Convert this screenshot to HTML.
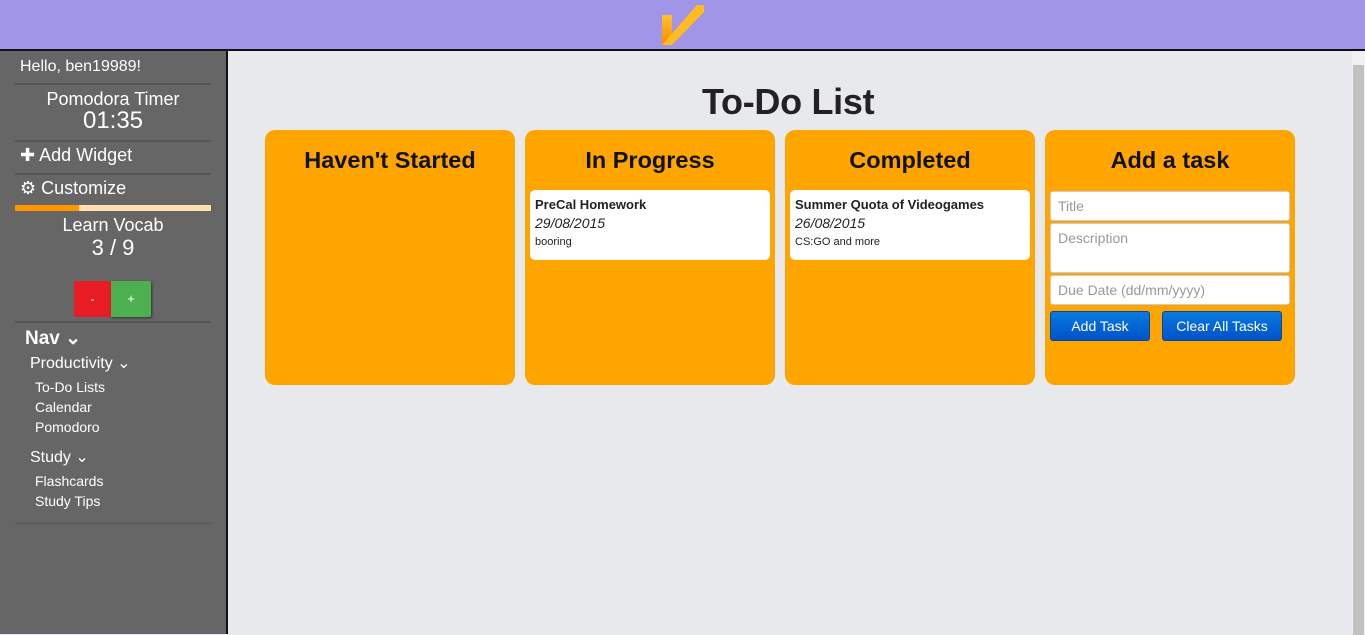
<!DOCTYPE html>
<html><head><style>
*{box-sizing:border-box;margin:0;padding:0}
body{width:1365px;height:634px;overflow:hidden;background:#e8e9ed;font-family:"Liberation Sans",sans-serif;position:relative}
#hdr{position:absolute;left:0;top:0;width:1365px;height:51px;background:#a095e6;border-bottom:2px solid #111}
#side{position:absolute;left:0;top:51px;width:226px;height:583px;background:#666;color:#fff}
#vline{position:absolute;left:226px;top:51px;width:2px;height:583px;background:#111}
.hr{position:absolute;left:15px;width:196px;height:2px;background:#555}
.t{position:absolute;white-space:nowrap}
.c{left:0;width:226px;text-align:center}
#sb{position:absolute;left:1352px;top:51px;width:13px;height:583px;background:#f0f0f0}
#sb div{position:absolute;left:1px;top:14px;width:11px;height:570px;background:#c1c1c1}
.col{position:absolute;top:130px;width:250px;height:255px;background:#ffa500;border-radius:10px}
.col h2{font-family:"Liberation Sans",sans-serif;font-weight:bold;font-size:23.5px;text-align:center;margin-top:17px;color:#111}
.card{position:absolute;left:5px;top:60px;width:240px;height:70px;background:#fff;border-radius:5px;padding:6px 5px;color:#222}
.card b{font-size:13px;display:block;line-height:17px}
.card i{font-size:14px;display:block;line-height:20px}
.card span{font-size:11px;display:block;line-height:18px}
.in{position:absolute;left:5px;width:240px;background:#fff;border:1px solid #ccc;border-radius:3px;color:#999;font-size:14px;padding:6px 7px}
.btn{position:absolute;top:181px;height:30px;background:linear-gradient(#0a7ae0,#0052c8);border:1px solid #0046a8;border-radius:3px;color:#fff;font-size:14px;text-align:center;line-height:28px}
</style></head><body>
<div id="hdr">
<svg style="position:absolute;left:660px;top:4px" width="46" height="42"><defs><linearGradient id="g" x1="0" y1="0" x2="0" y2="1"><stop offset="0" stop-color="#ffc030"/><stop offset="1" stop-color="#ff8c00"/></linearGradient></defs><rect x="2" y="11" width="10" height="30" fill="url(#g)"/><polygon points="2,41 12,41 44,8 44,1 37,1" fill="#ffbb22"/></svg>
</div>
<div id="side">
<div class="t" style="left:20px;top:7px;font-size:16px">Hello, ben19989!</div>
<div class="hr" style="top:32px"></div>
<div class="t c" style="top:38px;font-size:18px">Pomodora Timer</div>
<div class="t c" style="top:56px;font-size:24px">01:35</div>
<div class="hr" style="top:89px"></div>
<div class="t" style="left:20px;top:94px;font-size:18px">✚ Add Widget</div>
<div class="hr" style="top:122px"></div>
<div class="t" style="left:20px;top:127px;font-size:18px">⚙ Customize</div>
<div style="position:absolute;left:15px;top:154px;width:196px;height:6px;background:#ffdfb0"><div style="width:64px;height:6px;background:#ff9800"></div></div>
<div class="t c" style="top:164px;font-size:18px">Learn Vocab</div>
<div class="t c" style="top:184px;font-size:22px">3 / 9</div>
<div style="position:absolute;left:74px;top:230px;width:37px;height:36px;background:#e81c24;border-radius:2px 0 0 2px;text-align:center;line-height:36px;font-size:12px">-</div>
<div style="position:absolute;left:111px;top:230px;width:40px;height:36px;background:#4caf50;border-radius:0 2px 2px 0;text-align:center;line-height:36px;font-size:13px;box-shadow:1px 1px 2px #333">+</div>
<div class="hr" style="top:270px"></div>
<div class="t" style="left:25px;top:276px;font-size:19px;font-weight:bold">Nav ⌄</div>
<div class="t" style="left:30px;top:302px;font-size:16px">Productivity ⌄</div>
<div class="t" style="left:35px;top:328px;font-size:14px">To-Do Lists</div>
<div class="t" style="left:35px;top:348px;font-size:14px">Calendar</div>
<div class="t" style="left:35px;top:368px;font-size:14px">Pomodoro</div>
<div class="t" style="left:30px;top:396px;font-size:16px">Study ⌄</div>
<div class="t" style="left:35px;top:422px;font-size:14px">Flashcards</div>
<div class="t" style="left:35px;top:442px;font-size:14px">Study Tips</div>
<div class="hr" style="top:472px;height:1px"></div>
</div>
<div id="vline"></div>
<div id="sb"><div></div></div>
<div class="t" style="left:702px;top:81px;font-size:36px;font-weight:bold;color:#222;letter-spacing:-0.3px">To-Do List</div>
<div class="col" style="left:265px"><h2>Haven't Started</h2></div>
<div class="col" style="left:525px"><h2>In Progress</h2><div class="card"><b>PreCal Homework</b><i>29/08/2015</i><span>booring</span></div></div>
<div class="col" style="left:785px"><h2>Completed</h2><div class="card"><b>Summer Quota of Videogames</b><i>26/08/2015</i><span>CS:GO and more</span></div></div>
<div class="col" style="left:1045px"><h2>Add a task</h2>
<div class="in" style="top:61px;height:30px">Title</div>
<div class="in" style="top:93px;height:50px">Description</div>
<div class="in" style="top:145px;height:30px">Due Date (dd/mm/yyyy)</div>
<div class="btn" style="left:5px;width:100px">Add Task</div>
<div class="btn" style="left:117px;width:120px">Clear All Tasks</div>
</div>
</body></html>
